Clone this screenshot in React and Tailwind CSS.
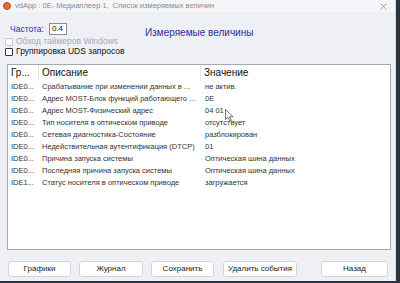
import React from "react";

const rows = [
  ["IDE0...", "Срабатывание при изменении данных в ...", "не актив."],
  ["IDE0...", "Адрес MOST-Блок функций работающего ...", "0E"],
  ["IDE0...", "Адрес MOST-Физический адрес", "04 01"],
  ["IDE0...", "Тип носителя в оптическом приводе", "отсутствует"],
  ["IDE0...", "Сетевая диагностика-Состояние", "разблокирован"],
  ["IDE0...", "Недействительная аутентификация (DTCP)", "01"],
  ["IDE0...", "Причина запуска системы", "Оптическая шина данных"],
  ["IDE0...", "Последняя причина запуска системы", "Оптическая шина данных"],
  ["IDE1...", "Статус носителя в оптическом приводе", "загружается"],
];

const buttons = [
  { label: "Графики", cls: "w-[63px]" },
  { label: "Журнал", cls: "w-[64px] ml-[8px]" },
  { label: "Сохранить", cls: "w-[63px] ml-[8px]" },
  { label: "Удалить события", cls: "w-[74px] ml-[9px]" },
  { label: "Назад", cls: "w-[67px] ml-[24px]" },
];

const Checkbox = ({ disabled }) => (
  <span
    className={`inline-block w-[8px] h-[8px] rounded-[1px] border bg-white ${
      disabled ? "border-[#c8c8cc]" : "border-[#333]"
    }`}
  />
);

const App = () => {
  return (
    <div
      className="w-[400px] h-[283px] flex bg-[#2a3340] overflow-hidden"
      style={{ fontFamily: '"Liberation Sans", Arial, sans-serif' }}
    >
      <div className="w-[396px] h-[281px] flex flex-col bg-[#eff0f5] border-r border-[#d8d8de] relative">
        {/* Title bar */}
        <div className="h-[12px] flex items-center bg-[#f6f6f9] pl-[3px] pr-[8px]">
          <span className="w-[8px] h-[8px] rounded-full bg-[#e06a3a] border border-[#c04a20]" />
          <span className="ml-[4px] text-[7.5px] leading-none text-[#8a8a90] whitespace-nowrap">
            vdApp : 0E- Медиаплеер 1,&nbsp; Список измеряемых величин
          </span>
          <svg className="ml-auto" width="7" height="7" viewBox="0 0 7 7">
            <path d="M0.5 0.5 L6.5 6.5 M6.5 0.5 L0.5 6.5" stroke="#8a8a90" strokeWidth="0.8" />
          </svg>
        </div>

        {/* Top controls */}
        <div className="h-[52px] flex pl-[5px]">
          <div className="w-[140px] flex flex-col">
            <div className="mt-[11px] h-[12px] flex items-center">
              <span className="ml-[5px] text-[8.5px] leading-none text-[#2236b0]">Частота:</span>
              <span className="ml-[5px] w-[18px] h-[12px] bg-white border border-[#8a8a90] text-[8px] leading-none flex items-center pl-[2px] text-[#111]">
                0.4
              </span>
            </div>
            <div className="mt-[2px] h-[9px] flex items-center gap-[3px]">
              <Checkbox disabled />
              <span className="text-[8.5px] leading-none text-[#a8a8ae] whitespace-nowrap">
                Обход таймеров Windows
              </span>
            </div>
            <div className="mt-[1px] h-[9px] flex items-center gap-[3px]">
              <Checkbox />
              <span className="text-[8.5px] leading-none text-[#111] whitespace-nowrap">
                Группировка UDS запросов
              </span>
            </div>
          </div>
          <div className="pt-[16px] text-[10px] leading-none text-[#2e2ca0] whitespace-nowrap">
            Измеряемые величины
          </div>
        </div>

        {/* Table */}
        <div className="ml-[7px] w-[384px] h-[186px] bg-white border border-[#a8a8b0] relative">
          <div className="h-[16px] flex items-center text-[10px] leading-none text-[#111]">
            <div className="w-[31px] pl-[3px] h-full flex items-center border-r border-[#e4e4e8]">Гр...</div>
            <div className="w-[162px] pl-[3px] h-full flex items-center border-r border-[#e4e4e8]">Описание</div>
            <div className="pl-[3px]">Значение</div>
          </div>
          {rows.map((r, i) => (
            <div key={i} className="h-[12px] flex items-center text-[7.5px] leading-none text-[#333] whitespace-nowrap">
              <div className="w-[31px] pl-[3px]">{r[0]}</div>
              <div className="w-[162px] pl-[3px] overflow-hidden">{r[1]}</div>
              <div className="pl-[4px]">{r[2]}</div>
            </div>
          ))}
          {/* mouse pointer */}
          <svg className="absolute left-[217px] top-[44px]" width="9" height="13" viewBox="0 0 9 13">
            <path d="M0.5 0.5 L0.5 10.5 L3 8.2 L4.8 12 L6.3 11.3 L4.6 7.7 L8 7.7 Z" fill="white" stroke="#333" strokeWidth="0.7" />
          </svg>
        </div>

        {/* Buttons */}
        <div className="mt-[11px] ml-[8px] flex">
          {buttons.map((b) => (
            <div
              key={b.label}
              className={`${b.cls} h-[16px] bg-white border border-[#d4d4dc] rounded-[3px] flex items-center justify-center text-[8px] leading-none text-[#222] whitespace-nowrap`}
            >
              {b.label}
            </div>
          ))}
        </div>
      </div>
    </div>
  );
};

export default App;
